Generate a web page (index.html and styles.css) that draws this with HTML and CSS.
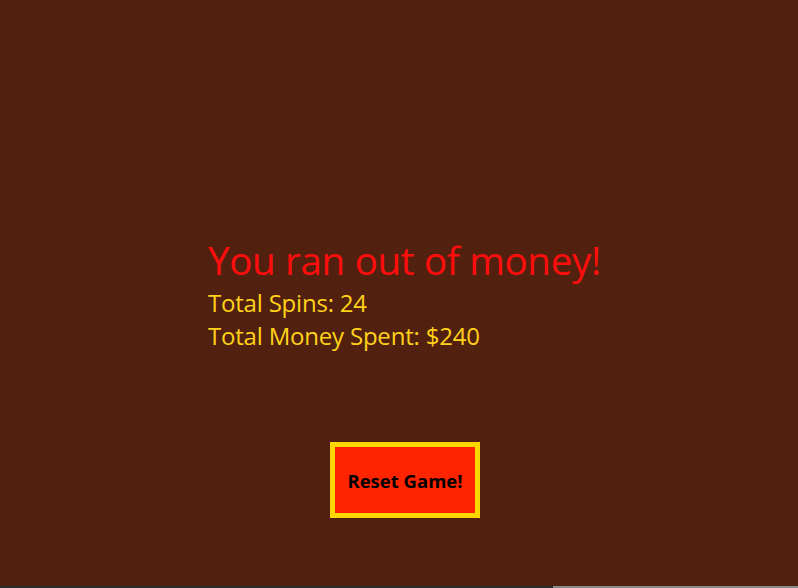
FILE: index.html
```html
<!DOCTYPE html>
<html lang="en">
<head>
<meta charset="utf-8">
<title>Game Over</title>
<link rel="stylesheet" href="styles.css">
</head>
<body>
<main class="screen">
  <section class="summary">
    <h1 class="title">You ran out of money!</h1>
    <p class="stat">Total Spins: 24</p>
    <p class="stat">Total Money Spent: $240</p>
  </section>
  <button class="reset" type="button">Reset Game!</button>
</main>
<div class="scrollbar"><div class="thumb"></div></div>
</body>
</html>
```
FILE: styles.css
```css
html, body {
  margin: 0;
  padding: 0;
  height: 100%;
  overflow: hidden;
}
body {
  background: #52200f;
  font-family: "Open Sans", "Noto Sans", sans-serif;
  display: flex;
  flex-direction: column;
}
.screen {
  flex: 1;
  display: flex;
  flex-direction: column;
  align-items: center;
  padding-left: 12px;
  padding-top: 234px;
}
.summary {
  width: 394px;
}
.title {
  margin: 0;
  color: #ff0d0d;
  font-weight: 400;
  font-size: 38.5px;
  line-height: 52px;
  letter-spacing: -0.3px;
}
.stat {
  margin: 0;
  color: #ffd21a;
  font-size: 24px;
  line-height: 33px;
  letter-spacing: -0.2px;
}
.reset {
  margin-top: 90px;
  width: 150px;
  height: 76px;
  background: #ff2400;
  border: 5px solid #ffd700;
  color: #000;
  font-family: "Open Sans", "Noto Sans", sans-serif;
  font-weight: 700;
  font-size: 18.5px;
  padding: 0;
}
.scrollbar {
  height: 2px;
  background: #2b2b2b;
  display: flex;
  justify-content: flex-end;
}
.thumb {
  width: 245px;
  background: #8a8a8a;
}
```
